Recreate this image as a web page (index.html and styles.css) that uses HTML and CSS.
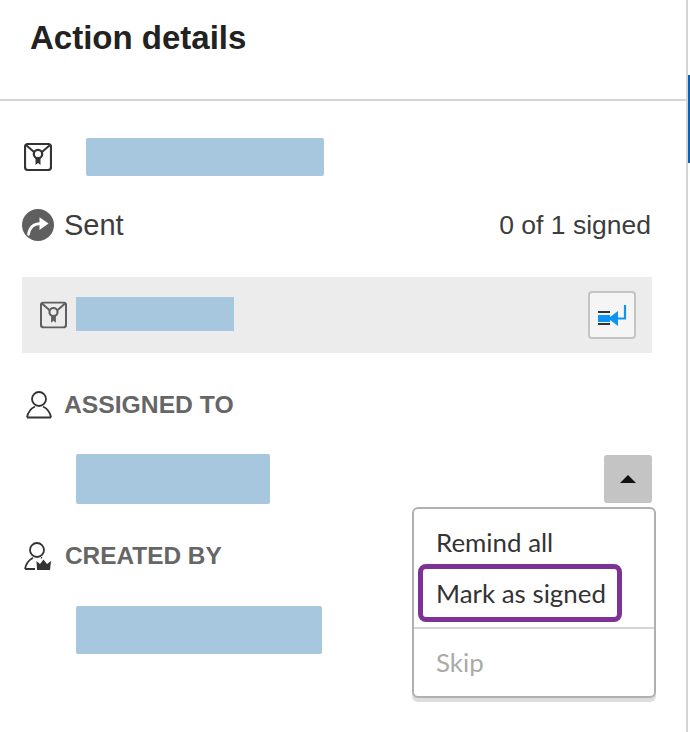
FILE: index.html
```html
<!DOCTYPE html>
<html lang="en">
<head>
<meta charset="utf-8">
<title>Action details</title>
<link rel="stylesheet" href="styles.css">
</head>
<body>
<div class="shell">
  <main class="panel">
    <header class="header"><h1 class="title">Action details</h1></header>
    <section class="content">
      <div class="doc-row">
        <svg class="doc-icon" viewBox="0 0 28 28" aria-hidden="true"><use href="#seal"/></svg>
        <div class="redact redact-doc"></div>
      </div>
      <div class="status-row">
        <div class="status">
          <svg class="sent-icon" viewBox="0 0 32 32" aria-hidden="true">
            <circle cx="16" cy="16" r="16" fill="#5f5f5f"/>
            <path d="M6.5 25.5C7.5 18.5 11.5 14.8 18 14.6" fill="none" stroke="#fff" stroke-width="2.6" stroke-linecap="round"/>
            <path d="M17.5 8.2L26.5 14.6L17.5 21Z" fill="#fff"/>
          </svg>
          <span>Sent</span>
        </div>
        <span class="count">0 of 1 signed</span>
      </div>
      <div class="signer-row">
        <svg class="signer-icon" viewBox="0 0 28 28" aria-hidden="true"><use href="#seal"/></svg>
        <div class="redact redact-signer"></div>
        <button class="jump" type="button" aria-label="Jump">
          <svg viewBox="0 0 30 24" width="30" height="24" aria-hidden="true">
            <rect x="1" y="8" width="12" height="2" fill="#333"/>
            <rect x="1" y="12" width="12" height="7" fill="#0f94f5"/>
            <rect x="1" y="20" width="12" height="2" fill="#333"/>
            <path d="M11 15.5L21 8V23Z" fill="#0f94f5"/>
            <path d="M20 15.5H28V2" fill="none" stroke="#0f94f5" stroke-width="2.2"/>
          </svg>
        </button>
      </div>
      <div class="section-head head-assigned">
        <svg class="person" viewBox="0 0 26 28" aria-hidden="true">
          <circle cx="13" cy="8" r="7" fill="none" stroke="#333" stroke-width="1.8"/>
          <path d="M1 26.5C2 20 6 17 9 15.5M25 26.5C24 20 20 17 17 15.5M1 26.5H25" fill="none" stroke="#333" stroke-width="1.8"/>
        </svg>
        <span>ASSIGNED TO</span>
      </div>
      <div class="assignee-row">
        <div class="redact redact-assignee"></div>
        <div class="menu-wrap">
          <button class="toggle" type="button" aria-label="Collapse"><span class="caret"></span></button>
          <div class="menu">
            <div class="menu-item">Remind all</div>
            <div class="menu-item menu-item-focus">Mark as signed</div>
            <div class="menu-sep"></div>
            <div class="menu-item menu-item-off">Skip</div>
          </div>
        </div>
      </div>
      <div class="section-head head-created">
        <svg class="person" viewBox="0 0 28 28" aria-hidden="true">
          <circle cx="13" cy="8" r="7" fill="none" stroke="#333" stroke-width="1.8"/>
          <path d="M1 27C2 21 6 17.5 9 15.8M1 27H11M17 15.5L18 16" fill="none" stroke="#333" stroke-width="1.8"/>
          <path d="M13 28L12.5 19L16 22L19.5 17.5L23 22L27 19L26 28Z" fill="#333"/>
        </svg>
        <span>CREATED BY</span>
      </div>
      <div class="redact redact-creator"></div>
    </section>
  </main>
  <div class="scroll"><div class="thumb"></div></div>
</div>
<svg class="defs" aria-hidden="true">
  <symbol id="seal" viewBox="0 0 28 28">
    <rect x="1" y="1" width="26" height="26" rx="3" fill="none" stroke="currentColor" stroke-width="2.2"/>
    <path d="M2 2L10 9M26 2L18 9" fill="none" stroke="currentColor" stroke-width="2"/>
    <circle cx="14" cy="11" r="4.2" fill="none" stroke="currentColor" stroke-width="2.2"/>
    <path d="M11.5 15V22L14 20L16.5 22V15Z" fill="currentColor"/>
  </symbol>
</svg>
</body>
</html>
```
FILE: styles.css
```css
* { box-sizing: border-box; }
html, body { margin: 0; padding: 0; }
body { width: 690px; height: 732px; overflow: hidden; background: #fff; font-family: "Liberation Sans", Arial, sans-serif; color: #333; }
.shell { display: flex; height: 732px; }
.panel { width: 688px; height: 732px; border-right: 2px solid #d5d5d5; }
.scroll { width: 2px; padding-top: 75px; }
.thumb { width: 2px; height: 88px; background: #0a61b5; }
.defs { display: none; }

.header { height: 101px; border-bottom: 2px solid #d5d5d5; padding: 20px 0 0 30px; }
.title { margin: 0; font-size: 33px; line-height: 36px; font-weight: 700; color: #222; }

.content { padding: 37px 34px 0 22px; }
.doc-row { display: flex; align-items: center; height: 38px; padding-left: 2px; }
.doc-icon { width: 28px; height: 28px; color: #333; margin-right: 34px; }
.redact { background: #a7c7df; border-radius: 2px; }
.redact-doc { width: 238px; height: 38px; }

.status-row { display: flex; justify-content: space-between; align-items: center; height: 36px; margin-top: 31px; }
.status { display: flex; align-items: center; gap: 10px; font-size: 29px; color: #3d3d3d; }
.sent-icon { width: 32px; height: 32px; }
.count { font-size: 26.5px; color: #3d3d3d; margin-right: 1px; }

.signer-row { display: flex; align-items: center; width: 630px; height: 76px; margin-top: 34px; padding: 0 16px 0 18px; background: #ececec; }
.signer-icon { width: 27px; height: 28px; color: #5f5f5f; margin-right: 9px; }
.redact-signer { width: 158px; height: 34px; margin-bottom: 2px; border-radius: 0; }
.jump { display: flex; align-items: center; justify-content: center; width: 48px; height: 48px; margin-left: auto; padding: 0; background: #f5f5f5; border: 2px solid #c4c4c4; border-radius: 4px; }

.section-head { display: flex; align-items: center; height: 28px; font-weight: 700; color: #666; }
.person { width: 26px; height: 28px; flex: none; }
.head-assigned { margin-top: 38px; padding-left: 4px; gap: 12px; font-size: 24.7px; }
.head-created { margin-top: 38px; padding-left: 2px; gap: 13px; font-size: 24.4px; }
.head-created .person { width: 28px; }

.assignee-row { display: flex; justify-content: space-between; align-items: center; width: 630px; height: 50px; margin-top: 35px; padding-left: 54px; }
.redact-assignee { width: 194px; height: 50px; }
.menu-wrap { position: relative; width: 48px; height: 48px; }
.toggle { display: flex; align-items: center; justify-content: center; width: 48px; height: 48px; padding: 0; background: #c4c4c4; border: 0; border-radius: 3px; }
.caret { width: 0; height: 0; border-left: 8px solid transparent; border-right: 8px solid transparent; border-bottom: 8px solid #111; }

.menu { position: absolute; top: 52px; right: -4px; z-index: 2; width: 244px; height: 191px; padding: 11px 0 0 4px; background: #fff; border: 2px solid #b0b0b0; border-radius: 6px; box-shadow: 0 4px 0 #ddd; font-family: Lato, sans-serif; font-size: 25.9px; line-height: 44px; color: #333; }
.menu-item { height: 44px; padding-left: 18px; }
.menu-item-focus { width: 204px; height: 58px; padding-left: 13px; line-height: 48px; border: 5px solid #7e3295; border-radius: 8px; }
.menu-sep { height: 2px; margin: 5px 0 0 -4px; background: #d5d5d5; }
.menu-item-off { margin-top: 11px; color: #aaa; }

.redact-creator { width: 246px; height: 48px; margin: 36px 0 0 54px; }
```
